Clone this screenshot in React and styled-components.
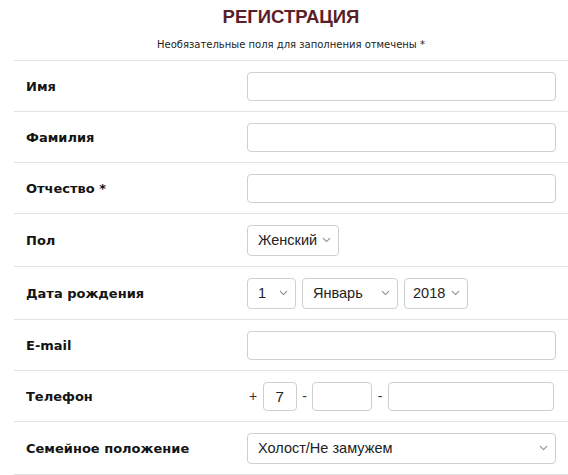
import React from "react";
import styled, { createGlobalStyle } from "styled-components";

const GlobalStyle = createGlobalStyle`
  html, body {
    margin: 0;
    padding: 0;
    background: #fff;
  }
  body {
    font-family: "DejaVu Sans", Verdana, sans-serif;
    color: #111;
  }
`;

const Page = styled.div`
  padding-left: 14px;
  width: 554px;
`;

const Header = styled.div`
  text-align: center;
  padding-top: 6px;
  height: 60px;
  box-sizing: border-box;
`;

const Title = styled.h1`
  margin: 0;
  font-family: "Liberation Sans", Arial, sans-serif;
  font-size: 18.5px;
  font-weight: 700;
  line-height: 21px;
  color: #5a1f29;
`;

const Note = styled.p`
  margin: 12px 0 0;
  font-size: 10px;
  line-height: 12px;
  color: #222;
`;

const Row = styled.div`
  display: flex;
  align-items: center;
  height: ${(p) => p.h || 50}px;
  border-top: 1px solid #e2e2e2;
  &:last-child {
    border-bottom: 1px solid #e2e2e2;
  }
`;

const Label = styled.div`
  width: 221px;
  padding-left: 12px;
  flex-shrink: 0;
  font-size: 13px;
  font-weight: 700;
  color: #141414;
`;

const Controls = styled.div`
  display: flex;
  align-items: center;
  gap: ${(p) => p.gap || 6}px;
`;

const Input = styled.input`
  box-sizing: border-box;
  width: ${(p) => p.w || 309}px;
  height: ${(p) => p.hh || 29}px;
  border: 1px solid #cfcfcf;
  border-radius: 4px;
  background: #fff;
  padding: 0 8px;
  font-family: "Liberation Sans", Arial, sans-serif;
  font-size: 15px;
  color: #222;
  text-align: ${(p) => (p.center ? "center" : "left")};
  outline: none;
`;

const SelectWrap = styled.div`
  position: relative;
  width: ${(p) => p.w}px;
`;

const Select = styled.select`
  box-sizing: border-box;
  width: 100%;
  height: ${(p) => p.hh || 31}px;
  appearance: none;
  border: 1px solid #cfcfcf;
  border-radius: 4px;
  background: #fff;
  padding: 0 0 0 ${(p) => p.pl || 10}px;
  font-family: "Liberation Sans", Arial, sans-serif;
  font-size: 14.5px;
  color: #222;
  outline: none;
`;

const Chevron = styled.svg`
  position: absolute;
  right: 8px;
  top: 50%;
  margin-top: -3px;
  width: 9px;
  height: 6px;
  pointer-events: none;
`;

const Sep = styled.span`
  font-family: "Liberation Sans", Arial, sans-serif;
  font-size: 14px;
  color: #333;
  margin-left: ${(p) => p.ml || 0}px;
`;

const Dropdown = ({ w, hh, pl, value, options }) => (
  <SelectWrap w={w}>
    <Select hh={hh} pl={pl} defaultValue={value}>
      {options.map((o) => (
        <option key={o}>{o}</option>
      ))}
    </Select>
    <Chevron viewBox="0 0 9 6">
      <path d="M1 1.2 L4.5 4.6 L8 1.2" fill="none" stroke="#8a8a8a" strokeWidth="1.1" />
    </Chevron>
  </SelectWrap>
);

export default function App() {
  return (
    <Page>
      <GlobalStyle />
      <Header>
        <Title>РЕГИСТРАЦИЯ</Title>
        <Note>Необязательные поля для заполнения отмечены *</Note>
      </Header>
      <Row>
        <Label>Имя</Label>
        <Input />
      </Row>
      <Row>
        <Label>Фамилия</Label>
        <Input />
      </Row>
      <Row>
        <Label>Отчество *</Label>
        <Input />
      </Row>
      <Row h={52}>
        <Label>Пол</Label>
        <Dropdown w={92} value="Женский" options={["Мужской", "Женский"]} />
      </Row>
      <Row h={52}>
        <Label>Дата рождения</Label>
        <Controls>
          <Dropdown w={49} value="1" options={["1", "2", "3"]} />
          <Dropdown w={96} value="Январь" options={["Январь", "Февраль"]} />
          <Dropdown w={64} pl={8} value="2018" options={["2018", "2017"]} />
        </Controls>
      </Row>
      <Row>
        <Label>E-mail</Label>
        <Input type="email" />
      </Row>
      <Row>
        <Label>Телефон</Label>
        <Controls gap={5.5}>
          <Sep ml={2}>+</Sep>
          <Input w={34} center defaultValue="7" />
          <Sep>-</Sep>
          <Input w={60} />
          <Sep>-</Sep>
          <Input w={166} />
        </Controls>
      </Row>
      <Row h={52}>
        <Label>Семейное положение</Label>
        <Dropdown w={309} value="Холост/Не замужем" options={["Холост/Не замужем", "Женат/Замужем"]} />
      </Row>
    </Page>
  );
}
